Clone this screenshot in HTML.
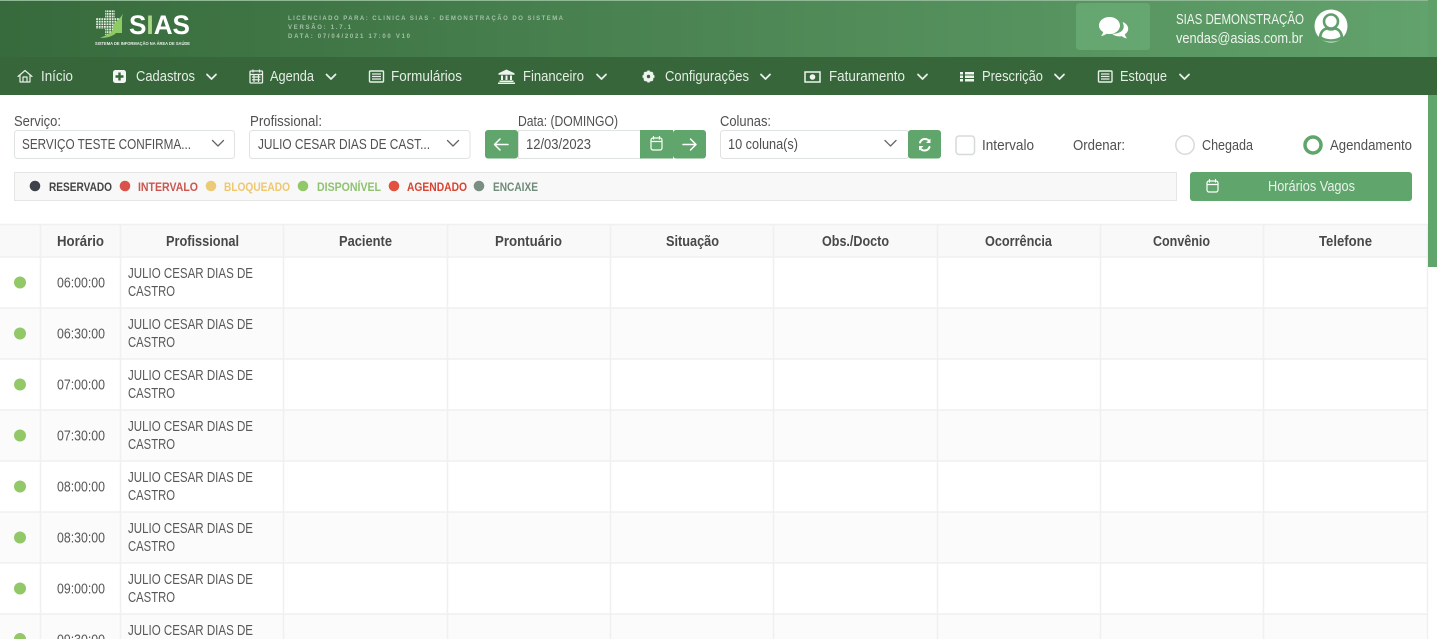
<!DOCTYPE html>
<html lang="pt"><head><meta charset="utf-8"><title>SIAS</title>
<style>
html,body{margin:0;padding:0;background:#fff;width:1437px;height:639px;overflow:hidden}
svg{display:block;position:absolute;left:0;top:0}
text{font-family:"Liberation Sans",sans-serif;font-size:14.5px;fill:#555}
.n{fill:#e4eee4;font-size:14.5px}
.l{fill:#505050;font-size:14.5px}
.b{font-weight:bold;font-size:11.5px}
.h{font-weight:bold;font-size:14.5px;fill:#484848}
.c{fill:#585858;font-size:14.5px}
.s{fill:none;stroke:#fff;stroke-width:1.5;stroke-linecap:round;stroke-linejoin:round}
.nv{fill:none;stroke:#e8f0e8;stroke-width:1.8;stroke-linecap:round;stroke-linejoin:round}
.g{fill:none;stroke:#666;stroke-width:1.3;stroke-linecap:round;stroke-linejoin:round}
.line{stroke:#f0f0f0;stroke-width:1.5}
</style></head><body>
<svg width="1437" height="639" viewBox="0 0 1437 639" xmlns="http://www.w3.org/2000/svg">
<defs>
<linearGradient id="hd" x1="0" x2="1" y1="0" y2="0"><stop offset="0" stop-color="#376a3c"/><stop offset="1" stop-color="#62a26c"/></linearGradient>
<pattern id="dots" width="2.6" height="2.6" patternUnits="userSpaceOnUse"><rect width="1.8" height="1.8" fill="#e8f0e4"/></pattern>
</defs>
<rect x="0" y="0" width="1437" height="57" fill="url(#hd)"/>
<rect x="0" y="0" width="1437" height="1" fill="#8fb894"/>
<rect x="0" y="57" width="1428" height="38" fill="#37663b"/>
<rect x="1428" y="57" width="9" height="38" fill="#37663b"/>

<!-- logo -->
<path d="M105 10h10v8h7v11h-8v6h-9v-6h-9v-11h9z" fill="url(#dots)"/>
<path d="M124 11C121 19 116 21 113 25V29C113 32 105 36 100 38C108 38 113 36 116 33H122V19C122 16 123 13 124 11Z" fill="#8fcb63"/>
<text x="129" y="34" textLength="61" lengthAdjust="spacingAndGlyphs" style="font-size:27px;font-weight:bold;fill:#fff">S<tspan style="fill:#a6d884">I</tspan>AS</text>
<text x="95" y="45" textLength="95" lengthAdjust="spacingAndGlyphs" style="font-size:4.6px;font-weight:bold;fill:#e8f0e8">SISTEMA DE INFORMAÇÃO NA ÁREA DE SAÚDE</text>

<text x="288" y="20" textLength="275" style="font-size:6px;font-weight:bold;fill:#a2c2a6">LICENCIADO PARA: CLINICA SIAS - DEMONSTRAÇÃO DO SISTEMA</text>
<text x="288" y="29" textLength="63" style="font-size:6px;font-weight:bold;fill:#a2c2a6">VERSÃO: 1.7.1</text>
<text x="288" y="38" textLength="122" style="font-size:6px;font-weight:bold;fill:#a2c2a6">DATA: 07/04/2021 17:00 V10</text>

<rect x="1076" y="3" width="74" height="47" rx="3" fill="#66a670"/>
<path d="M1099 25.500c0-4.600 4.500-8.500 10.500-8.500s10.500 3.900 10.500 8.500-4.500 8.500-10.500 8.500c-1 0-2-.1-3-.3-1.500 1.300-3.400 2-5.500 2.300 1-1.100 1.900-2.500 2.200-4-2.700-1.500-4.200-3.800-4.200-6.500z" fill="#fff"/>
<path d="M1122.500 22c3.500 1.200 5.700 3.800 5.700 6.800 0 2.200-1.200 4.200-3.300 5.500.3 1.500 1 2.900 2.100 4.100-2-.2-3.800-1-5.300-2.300-3.800.8-7.400-.1-9.700-2.300 6.200.4 15-2.900 10.500-11.800z" fill="#fff"/>
<text x="1176" y="24" textLength="128" lengthAdjust="spacingAndGlyphs" style="font-size:14.5px;fill:#eef5ee">SIAS DEMONSTRAÇÃO</text>
<text x="1176" y="43" textLength="127" lengthAdjust="spacingAndGlyphs" style="font-size:14.5px;fill:#eef5ee">vendas@asias.com.br</text>
<circle cx="1331" cy="26" r="16.500" fill="#fff"/>
<circle cx="1331" cy="21.500" r="7" fill="none" stroke="#5f9f69" stroke-width="2.600"/>
<path d="M1320 37c1-6 4-8 7-8.500 3 1.500 5 1.500 8 0 3 .5 6 2.500 7 8.500-3 2.500-7 3.500-11 3.500s-8-1-11-3.500z" fill="none" stroke="#5f9f69" stroke-width="2.600"/>

<!-- nav -->
<path class="nv" style="stroke-width:1.200" d="M18 76.500l7-6 7 6M20 75v7h10v-7M23 82v-5h4v5"/>
<text class="n" x="41" y="81" textLength="32" lengthAdjust="spacingAndGlyphs">Início</text>
<rect x="113" y="70" width="13" height="13" rx="2.500" fill="#f2f6f2"/><path d="M119.500 72.500v8M115.500 76.500h8" stroke="#37663b" stroke-width="2.400"/>
<text class="n" x="136" y="81" textLength="59" lengthAdjust="spacingAndGlyphs">Cadastros</text>
<path class="nv" d="M207 74.500l4.500 4.500 4.500-4.500"/>
<rect x="250" y="71" width="12.500" height="12" rx="1" fill="none" stroke="#e8f0e8" stroke-width="1.300"/><path d="M250 74.500h12.500M253 69.500v3M259.500 69.500v3M252 77h8.500M252 79.800h8.500M254 75v7M258.500 75v7" stroke="#e8f0e8" stroke-width="1.200"/>
<text class="n" x="270" y="81" textLength="44" lengthAdjust="spacingAndGlyphs">Agenda</text>
<path class="nv" d="M326.500 74.500l4.500 4.500 4.500-4.500"/>
<rect x="369.500" y="71" width="14" height="11" rx="1" fill="none" stroke="#e8f0e8" stroke-width="1.400"/><path d="M372 74h9M372 76.500h9M372 79h9" stroke="#e8f0e8" stroke-width="1.300"/>
<text class="n" x="391" y="81" textLength="71" lengthAdjust="spacingAndGlyphs">Formulários</text>
<path d="M506.500 69.500l8 3.800v1.500h-16v-1.500zM499.500 80.500h14v1.500h-14zM498 82.500h17v1.500h-17zM501 75.500h2v4.500h-2zM505.500 75.500h2v4.500h-2zM510 75.500h2v4.500h-2z" fill="#eef4ee"/>
<text class="n" x="523" y="81" textLength="61" lengthAdjust="spacingAndGlyphs">Financeiro</text>
<path class="nv" d="M597 74.500l4.500 4.500 4.500-4.500"/>
<circle cx="648.500" cy="76.500" r="3.800" fill="none" stroke="#eef4ee" stroke-width="3"/><path d="M648.500 70.500v12M642.500 76.500h12M644.300 72.300l8.400 8.400M652.700 72.300l-8.400 8.400" stroke="#eef4ee" stroke-width="2.400"/><circle cx="648.500" cy="76.500" r="1.700" fill="#37663b"/>
<text class="n" x="665" y="81" textLength="84" lengthAdjust="spacingAndGlyphs">Configurações</text>
<path class="nv" d="M761 74.500l4.500 4.500 4.500-4.500"/>
<rect x="805" y="72" width="15" height="10" fill="none" stroke="#eef4ee" stroke-width="1.500"/><circle cx="812.500" cy="77" r="2.800" fill="#eef4ee"/>
<text class="n" x="829" y="81" textLength="76" lengthAdjust="spacingAndGlyphs">Faturamento</text>
<path class="nv" d="M918 74.500l4.500 4.500 4.500-4.500"/>
<path d="M960 72h3v2.500h-3zM960 75.500h3v2.500h-3zM960 79h3v2.500h-3zM965 72h9v2.500h-9zM965 75.500h9v2.500h-9zM965 79h9v2.500h-9z" fill="#eef4ee"/>
<text class="n" x="982" y="81" textLength="61" lengthAdjust="spacingAndGlyphs">Prescrição</text>
<path class="nv" d="M1055 74.500l4.500 4.500 4.500-4.500"/>
<rect x="1098.500" y="71" width="13.500" height="11" rx="1" fill="none" stroke="#e8f0e8" stroke-width="1.400"/><path d="M1101 74h8.500M1101 76.500h8.500M1101 79h8.500" stroke="#e8f0e8" stroke-width="1.300"/>
<text class="n" x="1120" y="81" textLength="47" lengthAdjust="spacingAndGlyphs">Estoque</text>
<path class="nv" d="M1180 74.500l4.500 4.500 4.500-4.500"/>

<!-- filters -->
<text class="l" x="14" y="126" textLength="47" lengthAdjust="spacingAndGlyphs">Serviço:</text>
<text class="l" x="250" y="126" textLength="72" lengthAdjust="spacingAndGlyphs">Profissional:</text>
<text class="l" x="518" y="126" textLength="100" lengthAdjust="spacingAndGlyphs">Data: (DOMINGO)</text>
<text class="l" x="720" y="126" textLength="51" lengthAdjust="spacingAndGlyphs">Colunas:</text>

<rect x="14.500" y="130.500" width="220" height="28" rx="3" fill="#fff" stroke="#dfe3df"/>
<text class="l" x="22" y="149" textLength="169" lengthAdjust="spacingAndGlyphs">SERVIÇO TESTE CONFIRMA...</text>
<path class="g" d="M212.500 140.500l5.500 5.500 5.500-5.500"/>
<rect x="249.500" y="130.500" width="220.500" height="28" rx="3" fill="#fff" stroke="#dfe3df"/>
<text class="l" x="258" y="149" textLength="172" lengthAdjust="spacingAndGlyphs">JULIO CESAR DIAS DE CAST...</text>
<path class="g" d="M447.500 140.500l5.500 5.500 5.500-5.500"/>

<rect x="485" y="130" width="33" height="28.500" rx="3" fill="#5fa56c"/>
<path class="s" d="M508 144.500h-13M500 139l-5.500 5.500 5.500 5.500"/>
<rect x="518.500" y="130.500" width="122" height="28" fill="#fff" stroke="#dfe3df"/>
<text class="l" x="526" y="149" textLength="65" lengthAdjust="spacingAndGlyphs">12/03/2023</text>
<rect x="640" y="130" width="33" height="28.500" fill="#5fa56c"/>
<rect x="651" y="138" width="11" height="12" rx="2" class="s" style="stroke-width:1.200"/><path class="s" style="stroke-width:1.200" d="M651 141.500h11M653.500 136.500v2.500M659.500 136.500v2.500"/>
<rect x="673" y="130" width="33" height="28.500" rx="3" fill="#5fa56c"/>
<path class="s" d="M683 144.500h13M690.500 139l5.500 5.500-5.500 5.500"/>

<rect x="720.500" y="130.500" width="188" height="28" rx="3" fill="#fff" stroke="#dfe3df"/>
<text class="l" x="728" y="149" textLength="70" lengthAdjust="spacingAndGlyphs">10 coluna(s)</text>
<path class="g" d="M885 140.500l5.500 5.500 5.500-5.500"/>
<rect x="908" y="130" width="33" height="28.500" rx="3" fill="#5fa56c"/>
<path class="s" style="stroke-width:2" d="M929.500 141.500a5.300 5.300 0 0 0-9.500 1M920 148a5.300 5.300 0 0 0 9.500-1"/><path d="M930.500 138.500v4.500h-4.500zM919 150.500v-4.500h4.500z" fill="#fff"/>

<rect x="956" y="136" width="18.500" height="18.500" rx="3" fill="#fff" stroke="#d5dcd5" stroke-width="1.500"/>
<text class="l" x="982" y="150" textLength="52" lengthAdjust="spacingAndGlyphs">Intervalo</text>
<text class="l" x="1073" y="150" textLength="52" lengthAdjust="spacingAndGlyphs">Ordenar:</text>
<circle cx="1185" cy="145" r="9.200" fill="#fff" stroke="#d5dcd5" stroke-width="1.500"/>
<text class="l" x="1202" y="150" textLength="51" lengthAdjust="spacingAndGlyphs">Chegada</text>
<circle cx="1313" cy="145" r="8" fill="#fff" stroke="#5fa56c" stroke-width="3.500"/>
<text class="l" x="1330" y="150" textLength="82" lengthAdjust="spacingAndGlyphs">Agendamento</text>

<!-- legend -->
<rect x="14.500" y="172.500" width="1162" height="28" fill="#f8f8f8" stroke="#e4e6e4"/>
<circle cx="35" cy="186" r="5.300" fill="#3e4149"/>
<text class="b" x="49" y="191" textLength="63" lengthAdjust="spacingAndGlyphs" style="fill:#444">RESERVADO</text>
<circle cx="125" cy="186" r="5.300" fill="#d9534a"/>
<text class="b" x="138" y="191" textLength="60" lengthAdjust="spacingAndGlyphs" style="fill:#c9574f">INTERVALO</text>
<circle cx="211" cy="186" r="5.300" fill="#eccb77"/>
<text class="b" x="224" y="191" textLength="66" lengthAdjust="spacingAndGlyphs" style="fill:#eec76f">BLOQUEADO</text>
<circle cx="303" cy="186" r="5.300" fill="#92c868"/>
<text class="b" x="317" y="191" textLength="64" lengthAdjust="spacingAndGlyphs" style="fill:#8fc271">DISPONÍVEL</text>
<circle cx="394" cy="186" r="5.300" fill="#e2513f"/>
<text class="b" x="407" y="191" textLength="60" lengthAdjust="spacingAndGlyphs" style="fill:#d9432f">AGENDADO</text>
<circle cx="479" cy="186" r="5.300" fill="#7a8f84"/>
<text class="b" x="493" y="191" textLength="45" lengthAdjust="spacingAndGlyphs" style="fill:#6f8b7a">ENCAIXE</text>

<rect x="1190" y="172" width="222" height="29" rx="3" fill="#5fa56c"/>
<rect x="1207" y="181" width="11" height="11" rx="2" class="s" style="stroke-width:1.200"/><path class="s" style="stroke-width:1.200" d="M1207 184.500h11M1209.500 179.500v2.500M1215.500 179.500v2.500"/>
<text x="1268" y="191" textLength="87" lengthAdjust="spacingAndGlyphs" style="fill:#e9f3ea">Horários Vagos</text>

<!-- table -->
<rect x="0" y="224" width="1428" height="33" fill="#f8f9f8"/>
<rect x="0" y="308" width="1428" height="51" fill="#fbfbfb"/>
<rect x="0" y="410" width="1428" height="51" fill="#fbfbfb"/>
<rect x="0" y="512" width="1428" height="51" fill="#fbfbfb"/>
<rect x="0" y="614" width="1428" height="25" fill="#fbfbfb"/>
<g class="line">
<path d="M0 224.500H1428M0 257H1428M0 308H1428M0 359H1428M0 410H1428M0 461H1428M0 512H1428M0 563H1428M0 614H1428"/>
<path d="M40.500 224V639M120.500 224V639M283.500 224V639M447.500 224V639M610.500 224V639M773.500 224V639M937.500 224V639M1100.500 224V639M1263.500 224V639M1427.500 224V639"/>
</g>
<text class="h" x="57" y="246" textLength="47" lengthAdjust="spacingAndGlyphs">Horário</text>
<text class="h" x="166" y="246" textLength="73" lengthAdjust="spacingAndGlyphs">Profissional</text>
<text class="h" x="339" y="246" textLength="53" lengthAdjust="spacingAndGlyphs">Paciente</text>
<text class="h" x="495" y="246" textLength="67" lengthAdjust="spacingAndGlyphs">Prontuário</text>
<text class="h" x="666" y="246" textLength="53" lengthAdjust="spacingAndGlyphs">Situação</text>
<text class="h" x="822" y="246" textLength="67" lengthAdjust="spacingAndGlyphs">Obs./Docto</text>
<text class="h" x="985" y="246" textLength="67" lengthAdjust="spacingAndGlyphs">Ocorrência</text>
<text class="h" x="1153" y="246" textLength="57" lengthAdjust="spacingAndGlyphs">Convênio</text>
<text class="h" x="1319" y="246" textLength="53" lengthAdjust="spacingAndGlyphs">Telefone</text>

<g fill="#92c868"><circle cx="20" cy="282.500" r="6"/><circle cx="20" cy="333.500" r="6"/><circle cx="20" cy="384.500" r="6"/><circle cx="20" cy="435.500" r="6"/><circle cx="20" cy="486.500" r="6"/><circle cx="20" cy="537.500" r="6"/><circle cx="20" cy="588.500" r="6"/><circle cx="20" cy="639" r="6"/></g>

<text class="c" x="57" y="287.500" textLength="48" lengthAdjust="spacingAndGlyphs">06:00:00</text>
<text class="c" x="128" y="278" textLength="125" lengthAdjust="spacingAndGlyphs">JULIO CESAR DIAS DE</text>
<text class="c" x="128" y="296" textLength="47" lengthAdjust="spacingAndGlyphs">CASTRO</text>
<text class="c" x="57" y="338.500" textLength="48" lengthAdjust="spacingAndGlyphs">06:30:00</text>
<text class="c" x="128" y="329" textLength="125" lengthAdjust="spacingAndGlyphs">JULIO CESAR DIAS DE</text>
<text class="c" x="128" y="347" textLength="47" lengthAdjust="spacingAndGlyphs">CASTRO</text>
<text class="c" x="57" y="389.500" textLength="48" lengthAdjust="spacingAndGlyphs">07:00:00</text>
<text class="c" x="128" y="380" textLength="125" lengthAdjust="spacingAndGlyphs">JULIO CESAR DIAS DE</text>
<text class="c" x="128" y="398" textLength="47" lengthAdjust="spacingAndGlyphs">CASTRO</text>
<text class="c" x="57" y="440.500" textLength="48" lengthAdjust="spacingAndGlyphs">07:30:00</text>
<text class="c" x="128" y="431" textLength="125" lengthAdjust="spacingAndGlyphs">JULIO CESAR DIAS DE</text>
<text class="c" x="128" y="449" textLength="47" lengthAdjust="spacingAndGlyphs">CASTRO</text>
<text class="c" x="57" y="491.500" textLength="48" lengthAdjust="spacingAndGlyphs">08:00:00</text>
<text class="c" x="128" y="482" textLength="125" lengthAdjust="spacingAndGlyphs">JULIO CESAR DIAS DE</text>
<text class="c" x="128" y="500" textLength="47" lengthAdjust="spacingAndGlyphs">CASTRO</text>
<text class="c" x="57" y="542.500" textLength="48" lengthAdjust="spacingAndGlyphs">08:30:00</text>
<text class="c" x="128" y="533" textLength="125" lengthAdjust="spacingAndGlyphs">JULIO CESAR DIAS DE</text>
<text class="c" x="128" y="551" textLength="47" lengthAdjust="spacingAndGlyphs">CASTRO</text>
<text class="c" x="57" y="593.500" textLength="48" lengthAdjust="spacingAndGlyphs">09:00:00</text>
<text class="c" x="128" y="584" textLength="125" lengthAdjust="spacingAndGlyphs">JULIO CESAR DIAS DE</text>
<text class="c" x="128" y="602" textLength="47" lengthAdjust="spacingAndGlyphs">CASTRO</text>
<text class="c" x="57" y="644.500" textLength="48" lengthAdjust="spacingAndGlyphs">09:30:00</text>
<text class="c" x="128" y="635" textLength="125" lengthAdjust="spacingAndGlyphs">JULIO CESAR DIAS DE</text>

<!-- scrollbar -->
<rect x="1428" y="95" width="9" height="172" fill="#5fa56c"/>
<rect x="1428" y="0" width="9" height="57" fill="#5f9f69"/>
</svg>
</body></html>
